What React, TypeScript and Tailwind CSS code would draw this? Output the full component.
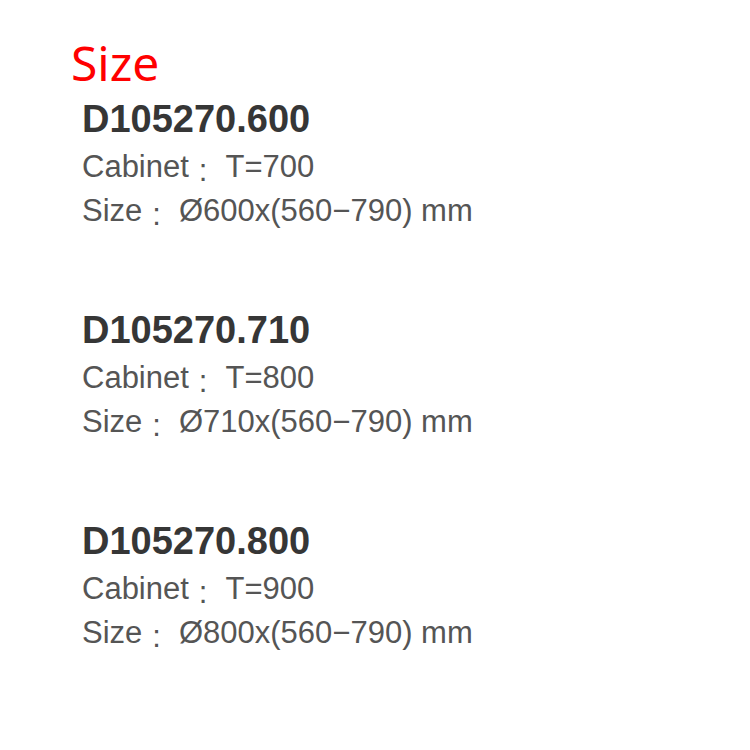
import React from 'react';

const models = [
  { code: 'D105270.600', cabinet: 'T=700', size: 'Ø600x(560−790) mm' },
  { code: 'D105270.710', cabinet: 'T=800', size: 'Ø710x(560−790) mm' },
  { code: 'D105270.800', cabinet: 'T=900', size: 'Ø800x(560−790) mm' },
];

// the source uses a low-sitting full-width colon
function Colon() {
  return <span className="inline-block ml-[10px] mr-[18px] translate-y-[4px]">:</span>;
}

export default function App() {
  return (
    <div className="w-[750px] h-[750px] bg-white pt-[38px] pl-[71px]">
      <h1 className="text-[48px] leading-[50px] text-[#ff0000] font-normal mb-[6px] font-['Noto_Sans','Noto_Sans_CJK_SC',sans-serif]">
        Size
      </h1>
      <div className="pl-[11px] flex flex-col gap-[72px] font-['Liberation_Sans','Noto_Sans_CJK_SC',sans-serif]">
        {models.map((m) => (
          <div key={m.code}>
            <h2 className="text-[38px] leading-[50px] font-bold text-[#363636]">{m.code}</h2>
            <p className="text-[31px] leading-[45px] text-[#555555]">
              Cabinet<Colon />{m.cabinet}
            </p>
            <p className="text-[31px] leading-[44px] text-[#555555]">
              Size<Colon />{m.size}
            </p>
          </div>
        ))}
      </div>
    </div>
  );
}
